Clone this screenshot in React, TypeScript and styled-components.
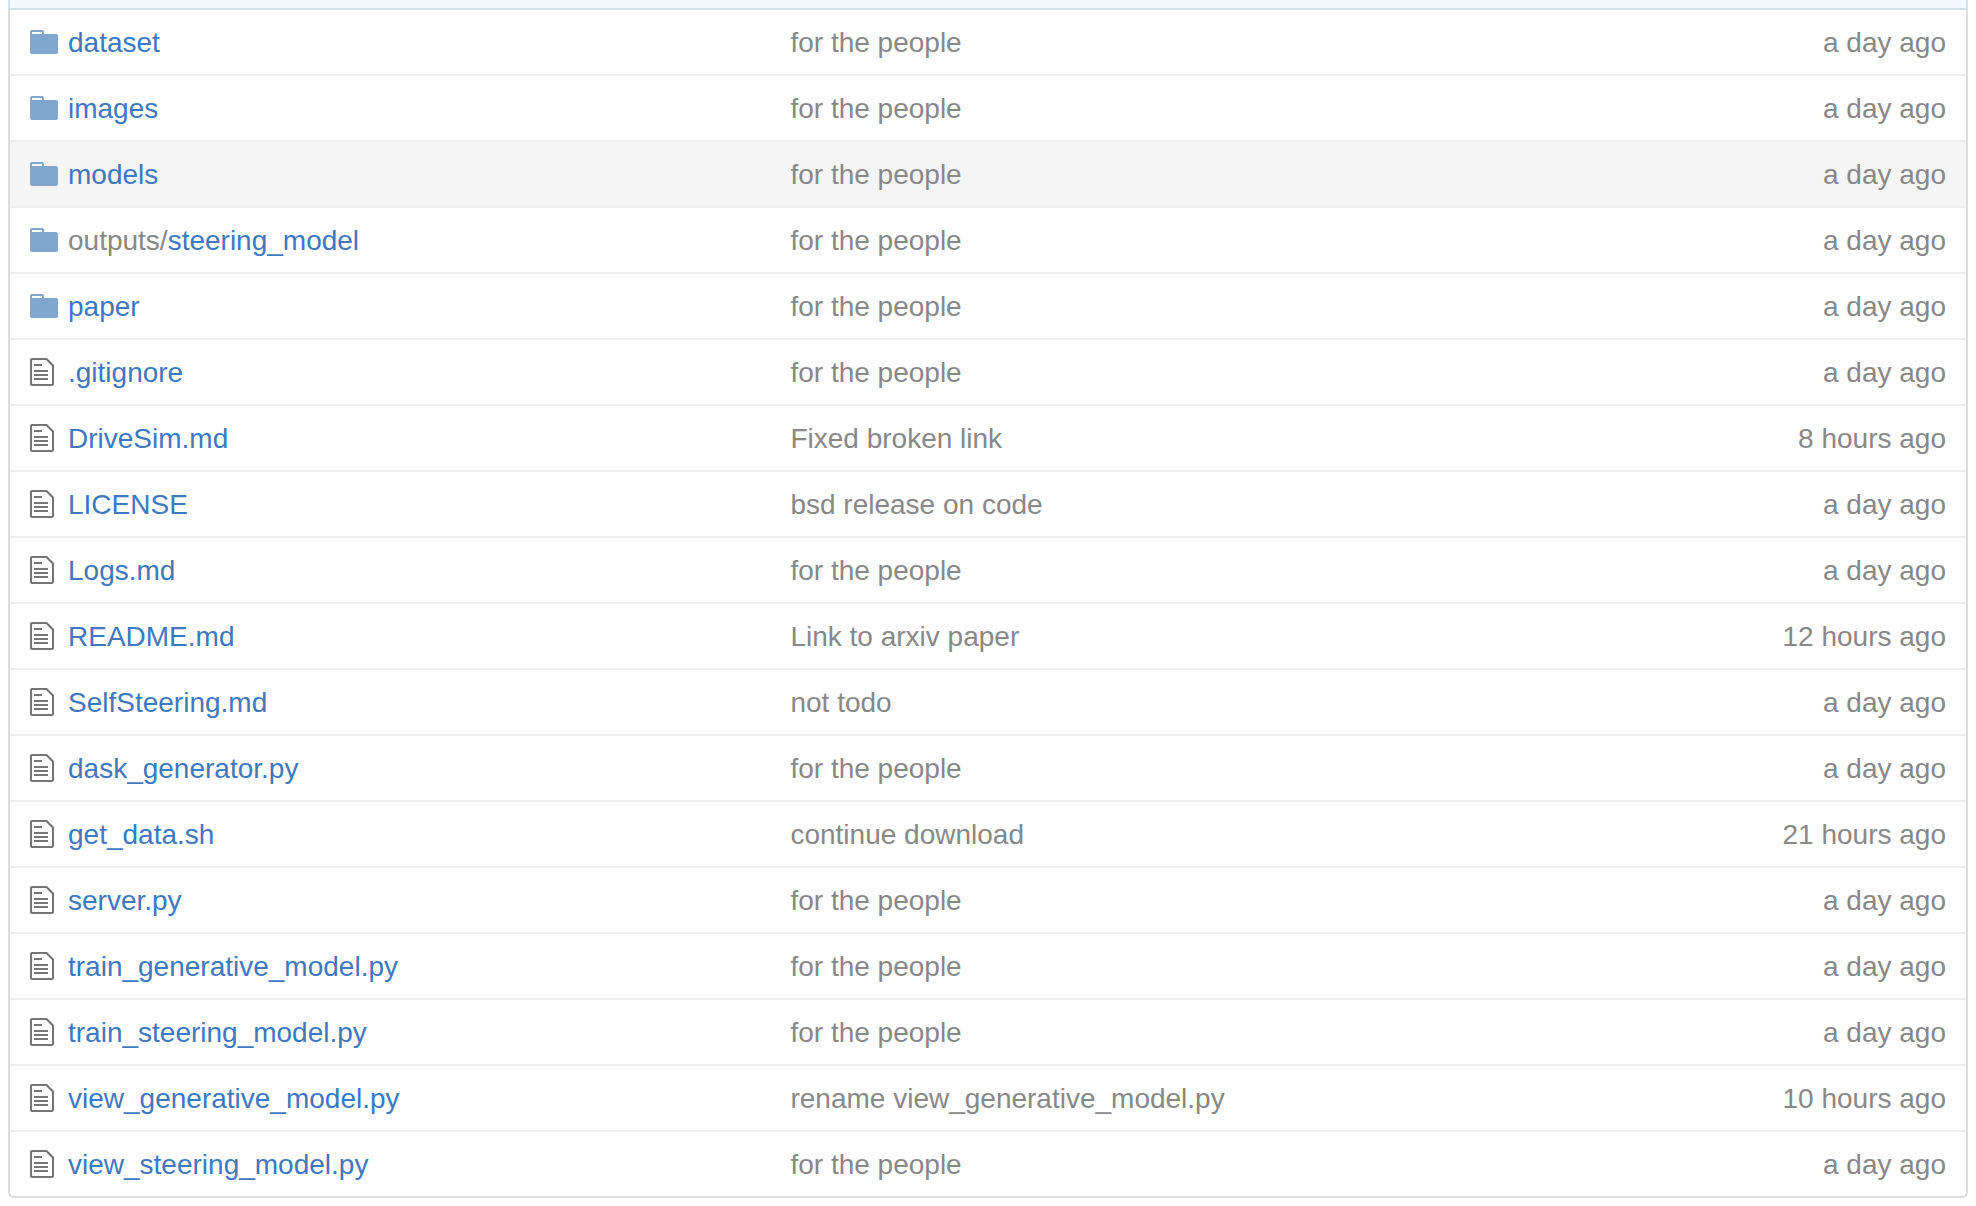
import React from 'react';
import styled, { createGlobalStyle } from 'styled-components';

const GlobalStyle = createGlobalStyle`
  *, *::before, *::after { box-sizing: border-box; }
  body {
    margin: 0;
    background: #fff;
    color: #888;
    font: 28px/40px "Liberation Sans", Arial, sans-serif;
  }
`;

const Page = styled.main`
  padding: 0 8px 8px;
`;

const CommitStrip = styled.div`
  height: 10px;
  background: #f2f9fc;
  border: solid #cfe3ea;
  border-width: 0 2px 2px;
`;

const FileBox = styled.div`
  border: 2px solid #ddd;
  border-top: 0;
  border-radius: 0 0 6px 6px;
  overflow: hidden;
`;

const FileTable = styled.table`
  width: 100%;
  table-layout: fixed;
  border-collapse: separate;
  border-spacing: 0;
`;

const Row = styled.tr<{ $active?: boolean }>`
  background: ${(p) => (p.$active ? '#f5f5f5' : '#fff')};

  &:not(:first-child) > td {
    border-top: 2px solid #eee;
    height: 66px;
  }
`;

const Cell = styled.td`
  height: 64px;
  padding: 2px 20px 0 0;
  vertical-align: middle;
  white-space: nowrap;
  overflow: hidden;
  text-overflow: ellipsis;
`;

const NameCell = styled(Cell)`
  width: 39.9%;
  padding-left: 20px;
`;

const AgeCell = styled(Cell)`
  width: 16%;
  text-align: right;
`;

const Name = styled.div`
  display: grid;
  grid-template-columns: 28px 1fr;
  column-gap: 10px;
  align-items: center;
`;

const Icon = styled.svg<{ $folder?: boolean }>`
  display: block;
  height: 32px;
  margin-bottom: 2px;
  fill: ${(p) => (p.$folder ? '#80a6cd' : '#767676')};
`;

const Link = styled.a`
  color: #4078c0;
  text-decoration: none;

  &:hover { text-decoration: underline; }
`;

const FolderIcon = () => (
  <Icon $folder viewBox="0 0 14 16" width="28" aria-hidden="true">
    <path d="M13 4H7V3c0-.66-.31-1-1-1H1c-.55 0-1 .45-1 1v10c0 .55.45 1 1 1h12c.55 0 1-.45 1-1V5c0-.55-.45-1-1-1zM6 4H1V3h5v1z" />
  </Icon>
);

const FileIcon = () => (
  <Icon viewBox="0 0 12 16" width="24" aria-hidden="true">
    <path d="M6 5H2V4h4v1zM2 8h7V7H2v1zm0 2h7V9H2v1zm0 2h7v-1H2v1zm10-7.5V14c0 .55-.45 1-1 1H1c-.55 0-1-.45-1-1V2c0-.55.45-1 1-1h7.5L12 4.5zM11 5L8 2H1v12h10V5z" />
  </Icon>
);

interface Entry {
  name: string;
  message?: string;
  age?: string;
  folder?: boolean;
  parent?: string;
  active?: boolean;
}

const entries: Entry[] = [
  { name: 'dataset', folder: true },
  { name: 'images', folder: true },
  { name: 'models', folder: true, active: true },
  { name: 'steering_model', parent: 'outputs/', folder: true },
  { name: 'paper', folder: true },
  { name: '.gitignore' },
  { name: 'DriveSim.md', message: 'Fixed broken link', age: '8 hours ago' },
  { name: 'LICENSE', message: 'bsd release on code' },
  { name: 'Logs.md' },
  { name: 'README.md', message: 'Link to arxiv paper', age: '12 hours ago' },
  { name: 'SelfSteering.md', message: 'not todo' },
  { name: 'dask_generator.py' },
  { name: 'get_data.sh', message: 'continue download', age: '21 hours ago' },
  { name: 'server.py' },
  { name: 'train_generative_model.py' },
  { name: 'train_steering_model.py' },
  { name: 'view_generative_model.py', message: 'rename view_generative_model.py', age: '10 hours ago' },
  { name: 'view_steering_model.py' },
];

export default function App() {
  return (
    <Page>
      <GlobalStyle />
      <CommitStrip />
      <FileBox>
        <FileTable>
          <tbody>
            {entries.map(({ name, message = 'for the people', age = 'a day ago', folder, parent, active }) => (
              <Row key={name} $active={active}>
                <NameCell>
                  <Name>
                    {folder ? <FolderIcon /> : <FileIcon />}
                    <span>
                      {parent}
                      <Link href={`#${name}`}>{name}</Link>
                    </span>
                  </Name>
                </NameCell>
                <Cell>{message}</Cell>
                <AgeCell>{age}</AgeCell>
              </Row>
            ))}
          </tbody>
        </FileTable>
      </FileBox>
    </Page>
  );
}
